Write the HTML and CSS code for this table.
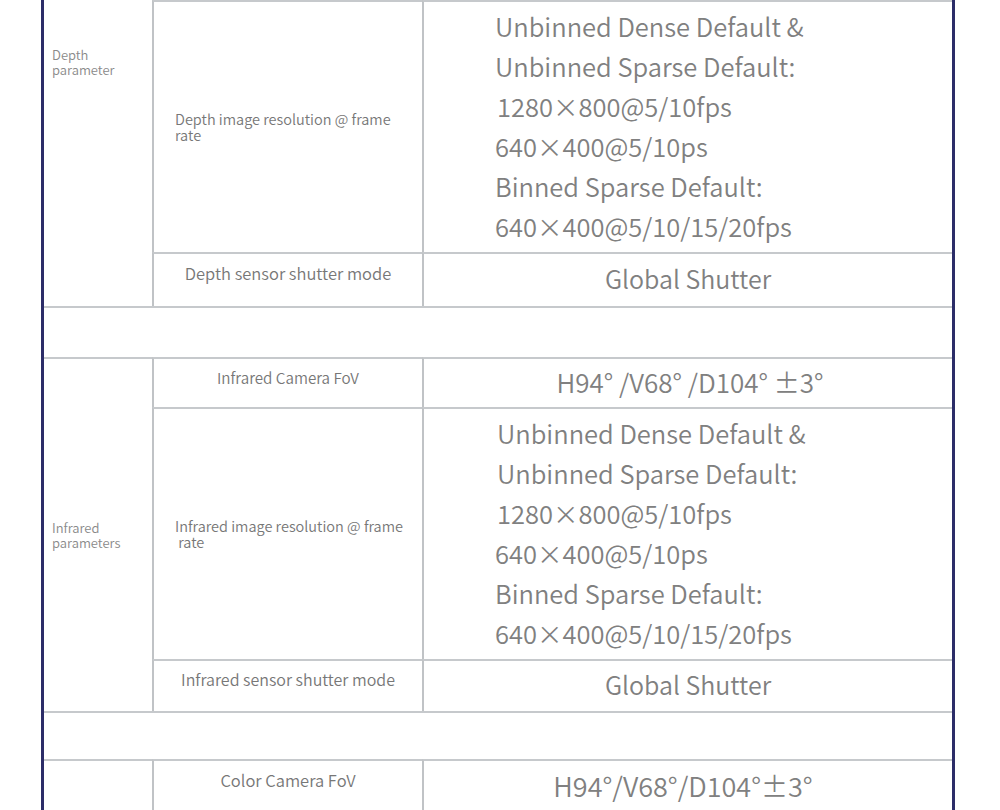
FILE: index.html
```html
<!DOCTYPE html>
<html lang="en">
<head>
    <meta charset="UTF-8">
    <title>Camera Specifications</title>
    <link rel="stylesheet" href="styles.css">
</head>
<body>
    <table class="spec-table">
        <colgroup>
            <col class="col-group">
            <col class="col-name">
            <col class="col-value">
        </colgroup>
        <tr class="row-tall">
            <td class="group group-top" rowspan="2">Depth<br>parameter</td>
            <td class="name name-left">Depth image resolution @ frame rate</td>
            <td class="value value-list">
                Unbinned Dense Default &amp;<br>
                Unbinned Sparse Default:<br>
                <span class="num">1280×800@5/10fps</span><br>
                640×400@5/10ps<br>
                Binned Sparse Default:<br>
                640×400@5/10/15/20fps
            </td>
        </tr>
        <tr class="row-short">
            <td class="name">Depth sensor shutter mode</td>
            <td class="value">Global Shutter</td>
        </tr>
        <tr class="row-gap">
            <td colspan="3"></td>
        </tr>
        <tr class="row-fov">
            <td class="group" rowspan="3">Infrared<br>parameters</td>
            <td class="name">Infrared Camera FoV</td>
            <td class="value value-fov">H94° /V68° /D104° ±3°</td>
        </tr>
        <tr class="row-tall">
            <td class="name name-left">Infrared image resolution @ frame<br>&nbsp;rate</td>
            <td class="value value-list">
                <span class="num">Unbinned Dense Default &amp;</span><br>
                <span class="num">Unbinned Sparse Default:</span><br>
                <span class="num">1280×800@5/10fps</span><br>
                640×400@5/10ps<br>
                Binned Sparse Default:<br>
                640×400@5/10/15/20fps
            </td>
        </tr>
        <tr class="row-short row-short-ir">
            <td class="name">Infrared sensor shutter mode</td>
            <td class="value">Global Shutter</td>
        </tr>
        <tr class="row-gap row-gap-small">
            <td colspan="3"></td>
        </tr>
        <tr class="row-short">
            <td class="group"></td>
            <td class="name">Color Camera FoV</td>
            <td class="value value-fov value-tight">H94°/V68°/D104°±3°</td>
        </tr>
    </table>
</body>
</html>
```

FILE: styles.css
```css
body {
    margin: 0;
    background: #fff;
    font-family: "Noto Sans CJK SC", "Noto Sans", sans-serif;
    font-weight: 350;
    color: #7d7d7d;
    overflow: hidden;
}

.spec-table {
    margin-left: 41px;
    width: 914px;
    table-layout: fixed;
    border-collapse: separate;
    border-spacing: 0;
    border-left: 3px solid #2c2d68;
    border-right: 3px solid #2c2d68;
}

.col-group { width: 108px; }
.col-name { width: 270px; }
.col-value { width: 530px; }

td {
    box-sizing: border-box;
    padding: 0;
    border-top: 2px solid #c6c9cc;
    border-left: 2px solid #c0c3c6;
    text-align: center;
    vertical-align: middle;
}

td.group,
td[colspan] {
    border-left: none;
}

.row-tall td { height: 252px; }
.row-short td { height: 54px; }
.row-short-ir td { height: 52px; }
.row-fov td { height: 50px; }
.row-gap td { height: 51px; }
.row-gap-small td { height: 48px; }

.group {
    text-align: left;
    padding-left: 8px;
    font-size: 13px;
    line-height: 15px;
    color: #8a8a8a;
}

.group-top {
    border-top: none;
    vertical-align: top;
    padding-top: 47px;
}

.name {
    font-size: 16.5px;
    color: #777;
    padding-bottom: 14px;
}

.row-fov .name {
    font-size: 15.2px;
    padding-bottom: 12px;
}

.row-short-ir .name {
    font-size: 16px;
}

.name-left {
    text-align: left;
    padding: 0 11px 0 21px;
    font-size: 14.5px;
    line-height: 16px;
}

.value {
    font-size: 25px;
    color: #808080;
    padding-bottom: 5px;
}

.value-fov {
    font-size: 26px;
    padding: 0 0 4px 4px;
}

.value-tight {
    font-size: 27px;
    padding-left: 0;
    padding-right: 10px;
}

.value-list {
    text-align: left;
    padding: 0 0 3px 71px;
    font-size: 25.5px;
    line-height: 40px;
}

.num {
    padding-left: 2px;
}
```
